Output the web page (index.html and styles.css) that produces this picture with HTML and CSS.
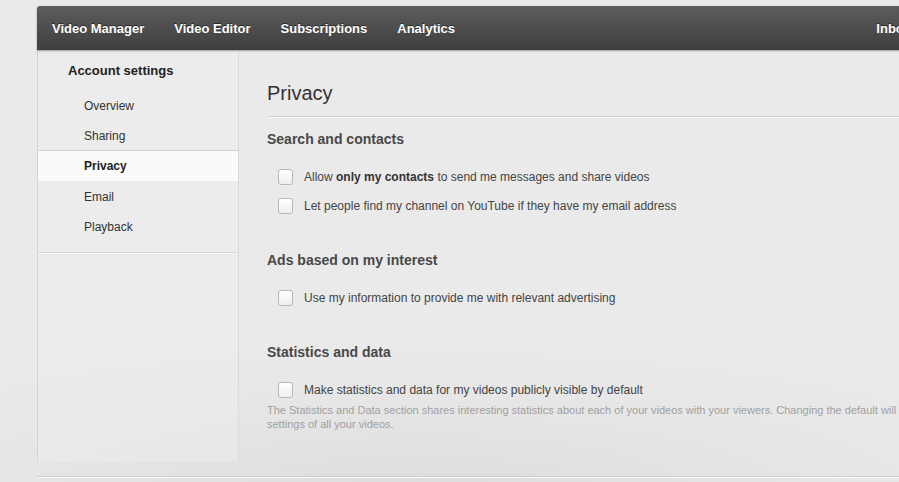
FILE: index.html
```html
<!DOCTYPE html>
<html>
<head>
<meta charset="utf-8">
<link rel="stylesheet" href="styles.css">
</head>
<body>
<div class="page">
  <nav class="topnav">
    <a href="#">Video Manager</a>
    <a href="#">Video Editor</a>
    <a href="#">Subscriptions</a>
    <a href="#">Analytics</a>
    <a href="#" class="inbox">Inbox</a>
  </nav>
  <div class="layout">
    <aside class="sidebar">
      <div class="side-title">Account settings</div>
      <ul class="side-menu">
        <li>Overview</li>
        <li>Sharing</li>
        <li class="active">Privacy</li>
        <li>Email</li>
        <li>Playback</li>
      </ul>
    </aside>
    <main class="main">
      <h1 class="page-title">Privacy</h1>
      <section class="group">
        <h2 class="group-title">Search and contacts</h2>
        <label class="option"><span class="box"></span><span>Allow <b>only my contacts</b> to send me messages and share videos</span></label>
        <label class="option"><span class="box"></span><span>Let people find my channel on YouTube if they have my email address</span></label>
      </section>
      <section class="group">
        <h2 class="group-title">Ads based on my interest</h2>
        <label class="option"><span class="box"></span><span>Use my information to provide me with relevant advertising</span></label>
      </section>
      <section class="group">
        <h2 class="group-title">Statistics and data</h2>
        <label class="option"><span class="box"></span><span>Make statistics and data for my videos publicly visible by default</span></label>
        <p class="help">The Statistics and Data section shares interesting statistics about each of your videos with your viewers. Changing the default will update the<br>settings of all your videos.</p>
      </section>
    </main>
  </div>
</div>
</body>
</html>
```
FILE: styles.css
```css
html, body {
  margin: 0;
  height: 482px;
  overflow: hidden;
}
body {
  background: radial-gradient(ellipse 700px 160px at 420px 500px, #dcdcdc 0%, #e6e6e6 60%, #eaeaea 100%);
  background-color: #e9e9e9;
  font-family: "Liberation Sans", Arial, Helvetica, sans-serif;
  color: #333;
}
.page {
  padding: 6px 0 0 37px;
  width: 903px;
}
.topnav {
  height: 44px;
  box-sizing: border-box;
  display: flex;
  align-items: center;
  gap: 30px;
  padding: 0 29px 0 15px;
  background: linear-gradient(#5d5d5d, #3e3e3e);
  border-radius: 3px 0 0 0;
  box-shadow: 0 1px 2px rgba(0, 0, 0, 0.35);
  position: relative;
  z-index: 1;
}
.topnav a {
  color: #fff;
  font-weight: bold;
  font-size: 13px;
  text-decoration: none;
  text-shadow: 0 -1px 0 rgba(0, 0, 0, 0.5);
}
.topnav .inbox {
  margin-left: auto;
}
.layout {
  display: flex;
  height: 427px;
  box-sizing: border-box;
  border-bottom: 1px solid #cdcdcd;
  box-shadow: 0 1px 0 #fafafa;
}
.sidebar {
  width: 200px;
  height: 412px;
  flex: none;
  border-left: 1px solid #d4d4d4;
  border-right: 1px solid #dadada;
  background: rgba(240, 240, 240, 0.35);
}
.side-title {
  height: 40px;
  box-sizing: border-box;
  padding: 13px 0 0 30px;
  line-height: 16px;
  font-size: 13px;
  font-weight: bold;
  color: #222;
}
.side-menu {
  list-style: none;
  margin: 0;
  padding: 0 0 11px;
  border-bottom: 1px solid #d6d6d6;
  box-shadow: 0 1px 0 #f8f8f8;
}
.side-menu li {
  height: 30px;
  line-height: 32px;
  padding-left: 46px;
  font-size: 12px;
  color: #333;
}
.side-menu li.active {
  background: #fafafa;
  border-top: 1px solid #d2d2d2;
  line-height: 30px;
  font-weight: bold;
  color: #222;
}
.main {
  flex: 1;
  padding: 31px 0 0 28px;
  min-width: 0;
}
.page-title {
  margin: 0;
  font-size: 20px;
  line-height: 24px;
  font-weight: normal;
  color: #333;
  padding-bottom: 11px;
  border-bottom: 1px solid #d3d3d3;
  box-shadow: 0 1px 0 #f7f7f7;
}
.group-title {
  margin: 0 0 14px;
  font-size: 14px;
  line-height: 18px;
  font-weight: bold;
  color: #484848;
}
.group {
  margin-top: 31px;
}
.group:first-of-type {
  margin-top: 13px;
}
.option {
  display: flex;
  align-items: center;
  height: 29px;
  padding-left: 11px;
  gap: 11px;
  font-size: 12px;
  color: #444;
}
.option b {
  color: #333;
}
.box {
  width: 15px;
  height: 16px;
  box-sizing: border-box;
  border: 1px solid #b8b8b8;
  border-radius: 3px;
  background: linear-gradient(#ffffff, #eeeeee);
  box-shadow: inset 0 1px 1px rgba(255, 255, 255, 0.8);
  flex: none;
}
.help {
  margin: -1px 0 0;
  font-size: 11px;
  line-height: 14px;
  color: #a0a0a0;
  white-space: nowrap;
}
```
